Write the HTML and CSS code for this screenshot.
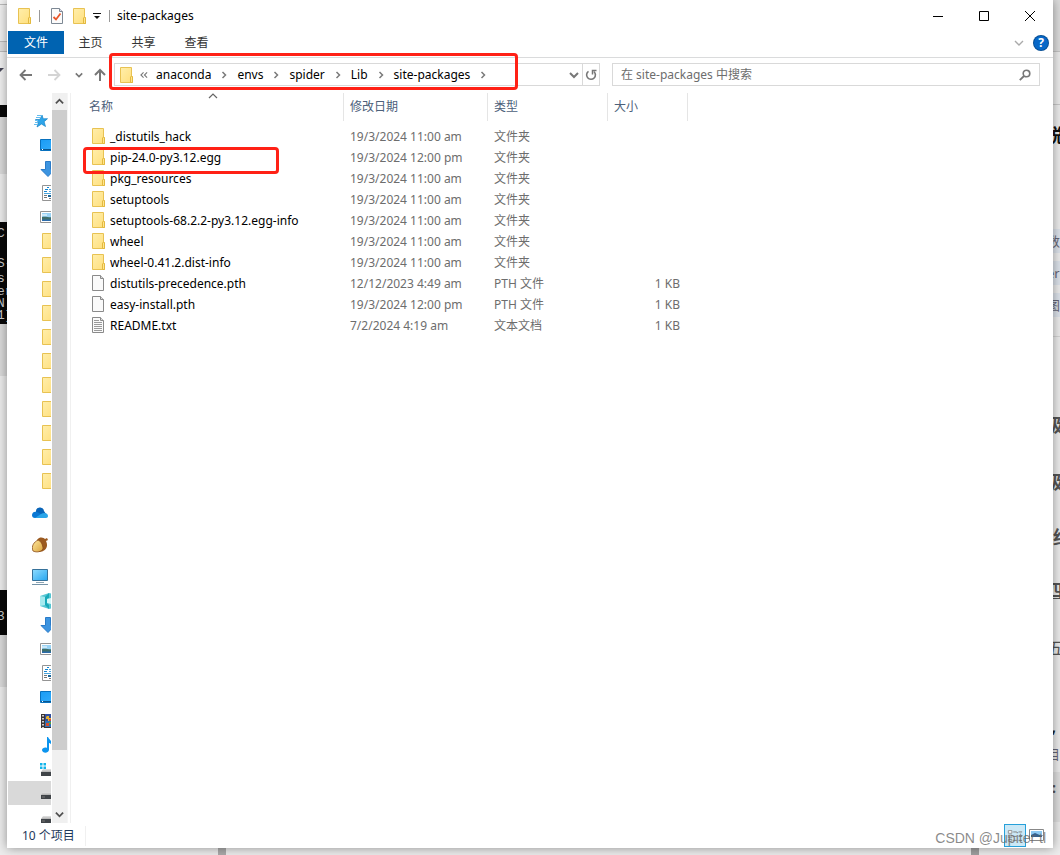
FILE: index.html
```html
<!DOCTYPE html>
<html lang="zh-CN">
<head>
<meta charset="utf-8">
<title>site-packages</title>
<link rel="stylesheet" href="styles.css">
</head>
<body>
<svg class="defs" aria-hidden="true">
  <defs>
    <linearGradient id="g-folder" x1="0" y1="0" x2="1" y2="1"><stop offset="0" stop-color="#ffeeab"/><stop offset="1" stop-color="#ffdf7c"/></linearGradient>
    <linearGradient id="g-blue" x1="0" y1="0" x2="1" y2="1"><stop offset="0" stop-color="#1a9cf5"/><stop offset="1" stop-color="#35aefc"/></linearGradient>
    <linearGradient id="g-screen" x1="0" y1="0" x2="1" y2="1"><stop offset="0" stop-color="#8edcff"/><stop offset="1" stop-color="#25a5f0"/></linearGradient>
    <linearGradient id="g-disk" x1="0" y1="0" x2="0" y2="1"><stop offset="0" stop-color="#e4e4e4"/><stop offset="1" stop-color="#b0b0b0"/></linearGradient>
    <linearGradient id="g-nut" x1="0" y1="0" x2="1" y2="1"><stop offset="0" stop-color="#ffe9a0"/><stop offset="1" stop-color="#d9a23c"/></linearGradient>
    <symbol id="folder" viewBox="-1 0 16 16"><path d="M1.5.5h11v9h1v6h-12z" fill="url(#g-folder)" stroke="#e8c252"/><path d="M11.5 10v5.5h2V10l-1-1z" fill="#ffe58f" stroke="#e3b93f"/></symbol>
    <symbol id="page" viewBox="-1 0 16 16"><path d="M1.5.5h8l3 3v12h-11z" fill="#fafafa" stroke="#8a8a8a"/><path d="M9.5.5v3h3" fill="#d8d8d8" stroke="#8a8a8a"/></symbol>
    <symbol id="text" viewBox="-1 0 16 16"><path d="M1.5.5h8l3 3v12h-11z" fill="#fafafa" stroke="#8a8a8a"/><path d="M9.5.5v3h3" fill="#ddd" stroke="#8a8a8a"/><path d="M3 3.5h5M3 5.5h8M3 7.5h8M3 9.5h8M3 11.5h8M3 13.5h8" stroke="#9a9a9a"/></symbol>
    <symbol id="check" viewBox="0 0 16 16"><path d="M2.500.5h8l3 3v12h-11z" fill="#fbfbfb" stroke="#7d8894"/><path d="M10.500.5v3h3" fill="#dde" stroke="#7d8894"/><path d="M4.500 9l2.500 2.500 4.500-6" fill="none" stroke="#e8562a" stroke-width="1.800"/></symbol>
    <symbol id="star" viewBox="0 0 16 16"><path d="M10 2l1.200 3.800 4.300-.1-3.400 3 1.400 4.800-4-2.500-4.500 3 1.500-4.900L3.500 6.500h4.300z" fill="#2da5ea" stroke="#1783c5" stroke-width=".7"/><path d="M5 2.500h5M4 4.500h4M3 7.500h3M3 9.500h3M2 11.500h3" stroke="#64bdf0"/></symbol>
    <symbol id="desktop" viewBox="0 0 16 16"><path d="M.5 2.500h15v11H.5z" fill="url(#g-blue)" stroke="#0871be"/><path d="M1 12.500h14" stroke="#0a568e"/><path d="M2 12.500h1" stroke="#fff"/></symbol>
    <symbol id="down" viewBox="0 0 16 16"><path d="M5.500.5h5v8h4L8 15.500 1 8.500h4.500z" fill="#3c94e0" stroke="#2a7bc8"/></symbol>
    <symbol id="doc" viewBox="0 0 16 16"><path d="M2.500.5h12v15h-12z" fill="#fff" stroke="#949494"/><path d="M4 6.500h3M5 4.500h3M7 2.500h2" stroke="#1686cf"/><path d="M9 4.500h4M9 6.500h4M4 8.500h9" stroke="#4ba4db"/><path d="M4 10.500h3M4 12.500h3M9 13.500h4" stroke="#777"/><path d="M8 11h5" stroke="#17649a" stroke-width="2"/></symbol>
    <symbol id="pic" viewBox="0 0 16 16"><path d="M.5 2.500h15v11H.5z" fill="#fff" stroke="#949494"/><path d="M2 4h13v8H2z" fill="#9ad3f5"/><path d="M2 8c4-1 7 1 13 0v4H2z" fill="#3f6e6a"/><path d="M2 10.500h13V12H2z" fill="#2c6cab"/><path d="M2 5.500h5v1H2z" fill="#fff"/></symbol>
    <symbol id="cloud" viewBox="0 0 16 16"><path d="M4 7a4 4 0 0 1 8-1l2 3H2z" fill="#0864b8"/><path d="M0 10c0-3 3-4 5-3l6 3-6 3H3c-2 0-3-1-3-3z" fill="#0a78d4"/><path d="M3 13l6-4c3-2 7-1 7 2 0 1-.8 2-2 2z" fill="#2aa5e9"/></symbol>
    <symbol id="acorn" viewBox="0 0 16 16"><path d="M5 3C8-1 12 1 13 2l2-1 1 2-2 1c3 6-1 11-7 11z" fill="#9b5a20"/><path d="M6 3c3 1 5 5 5 9-3 4-8 3-10 2C-1 9 2 5 6 3z" fill="url(#g-nut)" stroke="#8a4c18" stroke-width=".8"/></symbol>
    <symbol id="pc" viewBox="0 0 16 16"><path d="M.5.500h15v11H.5z" fill="url(#g-screen)" stroke="#36719a"/><path d="M4 13.500h8" stroke="#8ca4b3"/><path d="M0 15.500h16" stroke="#7694a8"/></symbol>
    <symbol id="cube" viewBox="0 0 16 16"><path d="M0 3l9-3 7 2v12l-7 2-9-3z" fill="#55c6d3"/><path d="M0 3l5 1v8l-5 1z" fill="#a6eaef"/><path d="M5 4l4-4v5l-2 1v4l2 2v4l-4-4z" fill="#18a9b9"/><path d="M7 6l9-2v8l-9-2z" fill="#d5f7f8"/></symbol>
    <symbol id="video" viewBox="0 0 16 16"><path d="M1 1h15v14H1z" fill="#3b3434"/><path d="M5 1h11v7H5z" fill="#304f9e"/><path d="M5 8h11v6H5z" fill="#2e70b4"/><path d="M7 3h2v2h3v3H8V6H6V4z" fill="#e6b02c"/><path d="M6 10h3v3H6zM9 6h3v2H9z" fill="#d94b2b"/><path d="M9 9h3v2H9z" fill="#59a13a"/><path d="M3 2v13" stroke="#fff" stroke-width="1.500" stroke-dasharray="1.500 1.500"/></symbol>
    <symbol id="music" viewBox="0 0 16 16"><path d="M8 0c1 3 5 4 4 9-1-2-2-3-3-3v7c-1 4-7 3-7 0 0-2 3-3 5-2V0z" fill="#0c94ee"/></symbol>
    <symbol id="disk" viewBox="0 0 16 16"><path d="M3 7h13v3H1z" fill="url(#g-disk)"/><path d="M1 10h15v4H1z" fill="#404448"/><path d="M2 12h3" stroke="#777"/></symbol>
    <symbol id="windisk" viewBox="0 0 16 16"><path d="M3 8h13v3H1z" fill="url(#g-disk)"/><path d="M1 11h15v4H1z" fill="#404448"/><path d="M0 2h2.500v2.500H0zM3.500 2H6v2.500H3.500zM0 5.500h2.500V8H0zM3.500 5.500H6V8H3.500z" fill="#12b4ea"/></symbol>
    <symbol id="chev" viewBox="0 0 8 8"><path d="M2.500 1l3 3-3 3" fill="none" stroke="#7a7a7a" stroke-width="1.500"/></symbol>
    <symbol id="chevdown" viewBox="0 0 10 10"><path d="M1 3l4 4 4-4" fill="none" stroke="currentColor" stroke-width="2"/></symbol>
    <symbol id="arrow" viewBox="0 0 14 12"><path d="M13 6H2M6.500 1l-5 5 5 5" fill="none" stroke="currentColor" stroke-width="1.800"/></symbol>
  </defs>
</svg>

<div class="behind left" aria-hidden="true">
  <i class="dropmark"></i>
  <span class="term t1">C:</span><span class="term t2">S-</span><span class="term t3">s</span><span class="term t4">er</span><span class="term t5">N</span><span class="term t6">1]</span><span class="term t7">3</span>
</div>
<div class="behind right" aria-hidden="true">
  <b class="r1">锐</b><span class="chip r2">数</span><span class="chip r3">er</span><span class="chip r4">图</span>
  <b class="r5">级</b><b class="r6">级</b><b class="r7">红</b><b class="r8">四</b><span class="r9">五</span><b class="r10">,</b><span class="chip r11">目</span><b class="r12">:</b>
</div>

<main class="window">
  <header class="titlebar">
    <svg class="ico"><use href="#folder"/></svg>
    <i class="bar"></i>
    <button class="tool" aria-label="属性"><svg class="ico"><use href="#check"/></svg></button>
    <button class="tool" aria-label="新建文件夹"><svg class="ico"><use href="#folder"/></svg></button>
    <button class="tool" aria-label="自定义快速访问工具栏"><svg class="small" viewBox="0 0 8 8"><path d="M0 1.500h8" stroke="#111"/><path d="M1 4h6L4 7z" fill="#111"/></svg></button>
    <i class="bar"></i>
    <h1>site-packages</h1>
    <div class="controls">
      <button aria-label="最小化"><svg viewBox="0 0 10 10"><path d="M0 5.500h10" stroke="#000"/></svg></button>
      <button aria-label="最大化"><svg viewBox="0 0 10 10"><path d="M.5.5h9v9h-9z" fill="none" stroke="#000"/></svg></button>
      <button aria-label="关闭"><svg viewBox="0 0 10 10"><path d="M0 0l10 10M10 0L0 10" stroke="#000"/></svg></button>
    </div>
  </header>

  <nav class="ribbon">
    <button class="tab file">文件</button>
    <button class="tab">主页</button>
    <button class="tab">共享</button>
    <button class="tab">查看</button>
    <button class="expand" aria-label="展开功能区"><svg viewBox="0 0 10 10"><path d="M1 3l4 4 4-4" fill="none" stroke="#aaa" stroke-width="1.400"/></svg></button>
    <button class="help" aria-label="帮助">?</button>
  </nav>

  <div class="addressrow">
    <div class="nav">
      <button aria-label="后退"><svg class="arrow"><use href="#arrow"/></svg></button>
      <button class="off" aria-label="前进"><svg class="arrow flip"><use href="#arrow"/></svg></button>
      <button class="recent" aria-label="最近浏览的位置"><svg class="small"><use href="#chevdown"/></svg></button>
      <button aria-label="上移"><svg class="arrow" viewBox="0 0 12 14"><path d="M6 13V2M1 7l5-5 5 5" fill="none" stroke="currentColor" stroke-width="2"/></svg></button>
    </div>
    <div class="address">
      <svg class="ico"><use href="#folder"/></svg>
      <span class="more"><svg class="small" viewBox="0 0 9 8"><path d="M4 1L1 4l3 3M8 1L5 4l3 3" fill="none" stroke="#777" stroke-width="1.200"/></svg></span>
      <a href="#">anaconda</a><svg class="sep"><use href="#chev"/></svg>
      <a href="#">envs</a><svg class="sep"><use href="#chev"/></svg>
      <a href="#">spider</a><svg class="sep"><use href="#chev"/></svg>
      <a href="#">Lib</a><svg class="sep"><use href="#chev"/></svg>
      <a href="#">site-packages</a><svg class="sep"><use href="#chev"/></svg>
      <button class="history" aria-label="以前的位置"><svg><use href="#chevdown"/></svg></button>
      <button class="refresh" aria-label="刷新"><svg viewBox="0 0 12 12"><path d="M3.500 2.300A4.400 4.400 0 1 0 8.800 2.500" fill="none" stroke="#777" stroke-width="1.600"/><path d="M7.500 5.500v-4h4" fill="none" stroke="#777" stroke-width="1.500"/></svg></button>
    </div>
    <div class="search">
      <input type="text" aria-label="搜索" placeholder="在 site-packages 中搜索">
      <svg viewBox="0 0 12 12"><circle cx="7.500" cy="4.500" r="3.300" fill="none" stroke="#777" stroke-width="1.600"/><path d="M5 7L.8 11.200" stroke="#777" stroke-width="1.800"/></svg>
    </div>
  </div>

  <div class="body">
    <aside class="tree">
      <ul>
        <li class="root"><svg><use href="#star"/></svg></li>
        <li><svg><use href="#desktop"/></svg></li>
        <li><svg><use href="#down"/></svg></li>
        <li><svg><use href="#doc"/></svg></li>
        <li><svg><use href="#pic"/></svg></li>
        <li><svg><use href="#folder"/></svg></li>
        <li><svg><use href="#folder"/></svg></li>
        <li><svg><use href="#folder"/></svg></li>
        <li><svg><use href="#folder"/></svg></li>
        <li><svg><use href="#folder"/></svg></li>
        <li><svg><use href="#folder"/></svg></li>
        <li><svg><use href="#folder"/></svg></li>
        <li><svg><use href="#folder"/></svg></li>
        <li><svg><use href="#folder"/></svg></li>
        <li><svg><use href="#folder"/></svg></li>
        <li><svg><use href="#folder"/></svg></li>
      </ul>
      <ul><li class="root"><svg><use href="#cloud"/></svg></li></ul>
      <ul><li class="root"><svg><use href="#acorn"/></svg></li></ul>
      <ul>
        <li class="root"><svg><use href="#pc"/></svg></li>
        <li><svg><use href="#cube"/></svg></li>
        <li><svg><use href="#down"/></svg></li>
        <li><svg><use href="#pic"/></svg></li>
        <li><svg><use href="#doc"/></svg></li>
        <li><svg><use href="#desktop"/></svg></li>
        <li><svg><use href="#video"/></svg></li>
        <li><svg><use href="#music"/></svg></li>
        <li><svg><use href="#windisk"/></svg></li>
        <li class="current"><svg><use href="#disk"/></svg></li>
        <li><svg><use href="#disk"/></svg></li>
      </ul>
    </aside>
    <div class="scroll">
      <button aria-label="向上滚动"><svg class="up"><use href="#chevdown"/></svg></button>
      <div class="track"><div class="thumb"></div></div>
      <button aria-label="向下滚动"><svg><use href="#chevdown"/></svg></button>
    </div>
    <section class="files">
      <table>
        <thead>
          <tr><th class="name">名称<svg class="sort" viewBox="0 0 10 6"><path d="M1 5l4-4 4 4" fill="none" stroke="#666" stroke-width="1.200"/></svg></th><th class="date">修改日期</th><th class="type">类型</th><th class="size">大小</th></tr>
        </thead>
        <tbody>
          <tr><td><svg><use href="#folder"/></svg>_distutils_hack</td><td>19/3/2024 11:00 am</td><td>文件夹</td><td></td></tr>
          <tr><td><svg><use href="#folder"/></svg>pip-24.0-py3.12.egg</td><td>19/3/2024 12:00 pm</td><td>文件夹</td><td></td></tr>
          <tr><td><svg><use href="#folder"/></svg>pkg_resources</td><td>19/3/2024 11:00 am</td><td>文件夹</td><td></td></tr>
          <tr><td><svg><use href="#folder"/></svg>setuptools</td><td>19/3/2024 11:00 am</td><td>文件夹</td><td></td></tr>
          <tr><td><svg><use href="#folder"/></svg>setuptools-68.2.2-py3.12.egg-info</td><td>19/3/2024 11:00 am</td><td>文件夹</td><td></td></tr>
          <tr><td><svg><use href="#folder"/></svg>wheel</td><td>19/3/2024 11:00 am</td><td>文件夹</td><td></td></tr>
          <tr><td><svg><use href="#folder"/></svg>wheel-0.41.2.dist-info</td><td>19/3/2024 11:00 am</td><td>文件夹</td><td></td></tr>
          <tr><td><svg><use href="#page"/></svg>distutils-precedence.pth</td><td>12/12/2023 4:49 am</td><td>PTH 文件</td><td>1 KB</td></tr>
          <tr><td><svg><use href="#page"/></svg>easy-install.pth</td><td>19/3/2024 12:00 pm</td><td>PTH 文件</td><td>1 KB</td></tr>
          <tr><td><svg><use href="#text"/></svg>README.txt</td><td>7/2/2024 4:19 am</td><td>文本文档</td><td>1 KB</td></tr>
        </tbody>
      </table>
    </section>
  </div>

  <footer class="status">
    <span>10 个项目</span>
    <div class="views">
      <button class="on" aria-label="详细信息"><svg viewBox="0 0 18 14"><path d="M1.500 1.500h4v3h-4zM1.500 6.500h4v3h-4zM1.500 11.500h4v2h-4z" fill="#fff" stroke="#888"/><path d="M7 3h10M7 8h10M7 12.500h10" stroke="#777" stroke-dasharray="4 2"/></svg></button>
      <button aria-label="大图标"><svg viewBox="0 0 16 13"><path d="M.5.500h14v11H.5z" fill="#fff" stroke="#888"/><path d="M2 2h11v6H2z" fill="#8cc8f2"/><path d="M2 6l4-2 7 3v1H2z" fill="#35608c"/></svg></button>
    </div>
  </footer>

  <div class="mark path-mark"></div>
  <div class="mark row-mark"></div>
  <div class="watermark">CSDN @Jupiter tl</div>
</main>
</body>
</html>
```

FILE: styles.css
```css
* { box-sizing: border-box; }
body {
  margin: 0;
  height: 100vh;
  padding: 0 7px 7px;
  position: relative;
  overflow: hidden;
  background: linear-gradient(90deg, transparent 218px, #aaa 218px 226px, transparent 226px 971px, #a0a0a0 971px 979px, transparent 979px) #ececec;
  font: 12px/20px "Noto Sans", "Noto Sans CJK SC", sans-serif;
  color: #000;
}
.defs { position: absolute; width: 0; height: 0; }
button { border: 0; padding: 0; background: none; font: inherit; color: inherit; display: flex; align-items: center; justify-content: center; }
ul { list-style: none; margin: 0; padding: 0; }

.behind { position: absolute; top: 0; bottom: 0; width: 7px; overflow: hidden; }
.left {
  left: 0;
  background: linear-gradient(#f2f2f2 4px, #bbb 4px 5px, #f0f0f0 5px 41px, #bbb 41px 42px, #e0e0e0 42px 51px, #bbb 51px 52px, #f0f0f0 52px 105px, #080808 105px 117px, #dadada 117px 174px, #ececec 174px 222px, #080808 222px 324px, #dadada 324px 376px, #ececec 376px 590px, #080808 590px 635px, #dadada 635px 687px, #ececec 687px);
}
.right {
  right: 0;
  background: linear-gradient(#dcdcdc 51px, #c4c4c4 51px 52px, #ececec 52px 104px, #c8c8c8 104px 105px, #ececec 105px 336px, #d4d4d4 336px 337px, #ececec 337px 772px, #dfdfdf 772px 822px, #ececec 822px);
}
.dropmark { position: absolute; top: 68px; left: -4px; border: 4px solid transparent; border-top-color: #445; }
.behind span, .behind b { position: absolute; left: -2px; white-space: nowrap; }
.term { color: #ccc; font: 13px/12px "Liberation Mono", monospace; }
.behind .term { left: -3px; }
.t1 { top: 228px; }
.t2 { top: 258px; }
.t3 { top: 273px; }
.t4 { top: 286px; }
.t5 { top: 298px; }
.t6 { top: 310px; }
.t7 { top: 611px; }
.right b { font-size: 18px; color: #555; left: -8px; }
.right .chip { color: #667; background: #dce2ea; font-size: 13px; line-height: 24px; left: -6px; }
.right .r1 { top: 125px; color: #111; }
.right .r2 { top: 229px; }
.right .r3 { top: 261px; }
.right .r4 { top: 293px; }
.right .r5 { top: 415px; }
.right .r6 { top: 472px; }
.right .r7 { top: 527px; left: 0; }
.right .r8 { top: 580px; text-decoration: underline; }
.right .r9 { top: 638px; left: -6px; font-size: 16px; color: #555; }
.right .r10 { top: 716px; left: -2px; color: #222; }
.right .r11 { top: 742px; background: none; }
.right .r12 { top: 778px; left: -1px; font-size: 14px; }

.window {
  position: relative;
  height: 100%;
  display: flex;
  flex-direction: column;
  background: #fff;
  box-shadow: 0 0 10px rgba(0, 0, 0, .4);
}
.titlebar { display: flex; align-items: center; height: 31px; padding-left: 9px; flex: none; }
.ico { width: 16px; height: 16px; flex: none; display: block; }
.bar { width: 1px; height: 12px; background: #999; margin: 0 9px 0 7px; }
.tool { margin-right: 6px; }
.tool + .bar { margin: 0 7px 0 2px; }
.small { width: 8px; height: 8px; display: block; }
h1 { margin: 0; font-size: 12px; font-weight: 400; }
.controls { margin-left: auto; display: flex; }
.controls button { width: 46px; height: 30px; }
.controls svg { width: 10px; height: 10px; }

.ribbon { display: flex; align-items: center; height: 27px; padding: 0 4px 3px 1px; border-bottom: 1px solid #dadbdc; flex: none; color: #333; }
.tab { width: 53px; height: 23px; }
.tab.file { width: 56px; background: #0063b1; color: #fff; }
.expand { margin-left: auto; width: 22px; height: 22px; }
.expand svg { width: 10px; height: 10px; }
.help { width: 14px; height: 14px; border-radius: 50%; background: #0868c8; box-shadow: 0 0 0 1px #064f96; color: #fff; font-weight: 700; line-height: 14px; margin: 0 1px 0 4px; }

.addressrow { display: flex; align-items: center; height: 33px; padding-right: 13px; flex: none; }
.nav { display: flex; width: 107px; padding-left: 12px; align-items: center; color: #777; flex: none; }
.nav button { width: 16px; height: 20px; margin-right: 14px; }
.nav .off { color: #d4d4d4; }
.nav .recent { width: 8px; margin-right: 10px; }
.arrow { width: 14px; height: 14px; flex: none; }
.flip { transform: scaleX(-1); }
.address { flex: 481; min-width: 0; display: flex; align-items: center; height: 23px; border: 1px solid #d9d9d9; padding-left: 3px; }
.address a { color: #000; text-decoration: none; }
.more { width: 22px; padding-left: 6px; }
.sep { width: 26px; height: 8px; flex: none; }
.address button { width: 16px; height: 21px; color: #777; }
.address .history { margin-left: auto; }
.address button svg { width: 10px; height: 10px; }
.address .refresh { width: 17px; border-left: 1px solid #d9d9d9; }
.address .refresh svg { width: 12px; height: 12px; }
.search { flex: 410; min-width: 0; margin-left: 12px; display: flex; align-items: center; height: 23px; border: 1px solid #d9d9d9; padding: 0 8px 0 8px; }
.search input { flex: 1; min-width: 0; border: 0; padding: 0; outline: 0; background: none; font: inherit; height: 20px; }
.search input::placeholder { color: #6d6d6d; opacity: 1; }
.search svg { width: 12px; height: 12px; }

.body { flex: 1; min-height: 0; display: flex; padding-top: 2px; }
.tree { width: 44px; padding: 16px 0 0 1px; overflow: hidden; flex: none; }
.tree ul { margin-bottom: 8px; }
.tree li { height: 24px; padding: 4px 0 0 32px; overflow: hidden; }
.tree .root { padding-left: 24px; }
.tree svg { width: 16px; height: 16px; display: block; }
.tree .current { background: #d9d9d9; }
.scroll { width: 16px; margin-left: 1px; display: flex; flex-direction: column; background: #f0f0f0; border-right: 1px solid #f5f5f5; color: #505050; flex: none; }
.scroll button { height: 17px; flex: none; }
.scroll button svg { width: 9px; height: 9px; }
.scroll .up { transform: scaleY(-1); }
.track { flex: 1; }
.thumb { height: 92%; background: #cdcdcd; }

.files { flex: 1; min-width: 0; margin-left: 2px; border-left: 1px solid #f0f0f0; }
table { border-collapse: separate; border-spacing: 0; table-layout: fixed; width: 617px; }
th { height: 28px; padding: 0 0 0 6px; text-align: left; font-weight: 400; color: #4c607a; border-right: 1px solid #e5e5e5; }
th.name { width: 273px; padding-left: 18px; position: relative; }
th.date { width: 144px; }
th.type { width: 120px; }
th.size { width: 80px; }
.sort { position: absolute; top: 0; left: 137px; width: 10px; height: 6px; }
tbody::before { content: ""; display: block; height: 5px; }
td { height: 21px; padding: 0 0 0 6px; color: #6d6d6d; white-space: nowrap; line-height: 20px; }
td:first-child { color: #000; padding-left: 19px; }
td:last-child { text-align: right; padding-right: 8px; }
td svg { width: 16px; height: 16px; margin-right: 4px; vertical-align: -3px; }

.status { height: 25px; flex: none; display: flex; align-items: center; padding: 0 5px 0 15px; color: #1e395b; }
.status span { padding-right: 10px; border-right: 1px solid #f0f0f0; }
.views { margin-left: auto; display: flex; }
.views button { width: 22px; height: 23px; }
.views .on { background: #cbe8f6; border: 1px solid #26a0da; }
.views svg { width: 16px; height: 13px; }

.mark { position: absolute; border: 3px solid #ff2116; border-radius: 4px; pointer-events: none; }
.path-mark { left: 102px; top: 53px; width: 409px; height: 37px; }
.row-mark { left: 76px; top: 147px; width: 196px; height: 27px; }
.watermark { position: absolute; right: 7px; bottom: 0; font: 14px/20px "Liberation Sans", sans-serif; color: rgba(100, 100, 100, .75); }
```
